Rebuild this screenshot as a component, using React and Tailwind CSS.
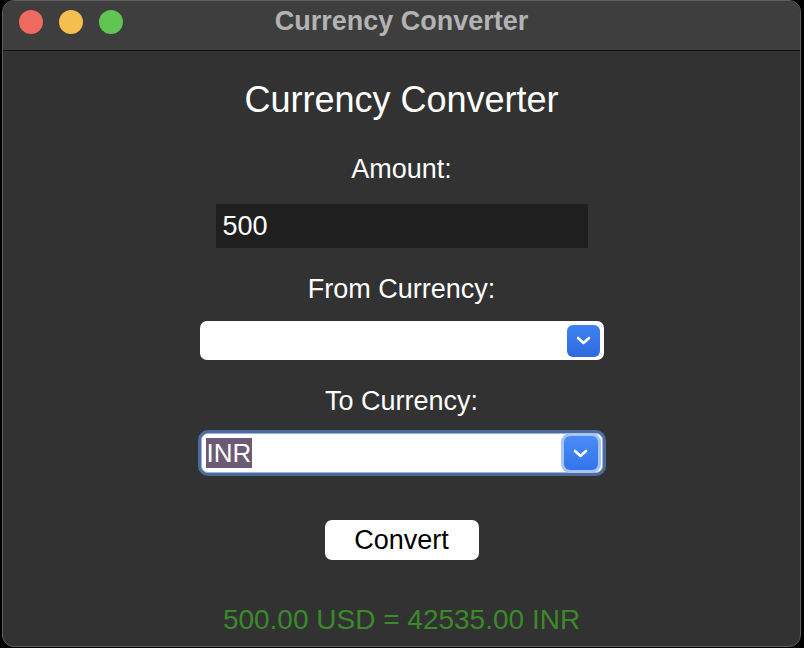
import React, { useState } from "react";

const Chevron = () => (
  <svg width="15" height="9" viewBox="0 0 15 9" fill="none">
    <path d="M2 2 L7.5 7 L13 2" stroke="white" strokeWidth="2.6" strokeLinecap="round" strokeLinejoin="round" />
  </svg>
);

const App = () => {
  const [amount] = useState("500");

  return (
    <div className="w-[804px] h-[648px] bg-black" style={{ fontFamily: '"Liberation Sans", Arial, sans-serif' }}>
      <div className="ml-[2px] w-[799px] h-[647px] rounded-[12px] border border-[#5e5e5e] bg-[#323232] overflow-hidden flex flex-col">
        {/* Title bar */}
        <div className="relative h-[50px] shrink-0 bg-[#3e3e3e] border-b border-[#0e0e0e] flex items-center justify-center">
          <div className="absolute left-[16px] top-[9px] flex gap-[16px]">
            <span className="w-[24px] h-[24px] rounded-full bg-[#ee6a5f]" />
            <span className="w-[24px] h-[24px] rounded-full bg-[#f5bf4f]" />
            <span className="w-[24px] h-[24px] rounded-full bg-[#61c554]" />
          </div>
          <span className="text-[27px] font-bold text-[#b3b3b3] leading-none -mt-[8px]">Currency Converter</span>
        </div>

        {/* Main Content */}
        <div className="flex flex-col items-center pt-[29px]">
          <h1 className="h-[40px] leading-[40px] text-[36px] text-white">Currency Converter</h1>

          <div className="mt-[34px] h-[30px] leading-[30px] text-[27px] text-white">Amount:</div>
          <div className="mt-[20px] w-[372px] h-[44px] bg-[#1f1f1f] flex items-center px-[7px] text-[27px] text-white">
            {amount}
          </div>

          <div className="mt-[26px] h-[30px] leading-[30px] text-[27px] text-white">From Currency:</div>
          <div className="mt-[17px] w-[404px] h-[39px] bg-white rounded-[7px] flex items-center justify-end pr-[4px]">
            <div className="w-[33px] h-[32px] rounded-[6px] bg-gradient-to-b from-[#3f82f2] to-[#2f6ae0] flex items-center justify-center">
              <Chevron />
            </div>
          </div>

          <div className="mt-[26px] h-[30px] leading-[30px] text-[27px] text-white">To Currency:</div>
          <div className="mt-[14px] w-[408px] h-[46px] rounded-[10px] bg-[#4b6c9c] p-[3px]">
            <div className="w-full h-full rounded-[7px] border border-[#9ab4db] bg-white flex items-center pl-[4px] pr-[1px]">
              <span className="bg-[#6b5a73] text-white text-[26px] leading-[30px] h-[30px] px-[1px]">INR</span>
              <div className="ml-auto w-[40px] h-[40px] rounded-[9px] bg-[#a8c4f4] p-[3px]">
                <div className="w-full h-full rounded-[6px] bg-gradient-to-b from-[#4a8cf6] to-[#3474ea] flex items-center justify-center">
                  <Chevron />
                </div>
              </div>
            </div>
          </div>

          <button className="mt-[44px] w-[154px] h-[40px] bg-white rounded-[7px] text-[27px] text-black leading-none">
            Convert
          </button>

          <div className="mt-[44px] h-[32px] leading-[32px] text-[28px] text-[#3a8a2a]">500.00 USD = 42535.00 INR</div>
        </div>
      </div>
    </div>
  );
};

export default App;
